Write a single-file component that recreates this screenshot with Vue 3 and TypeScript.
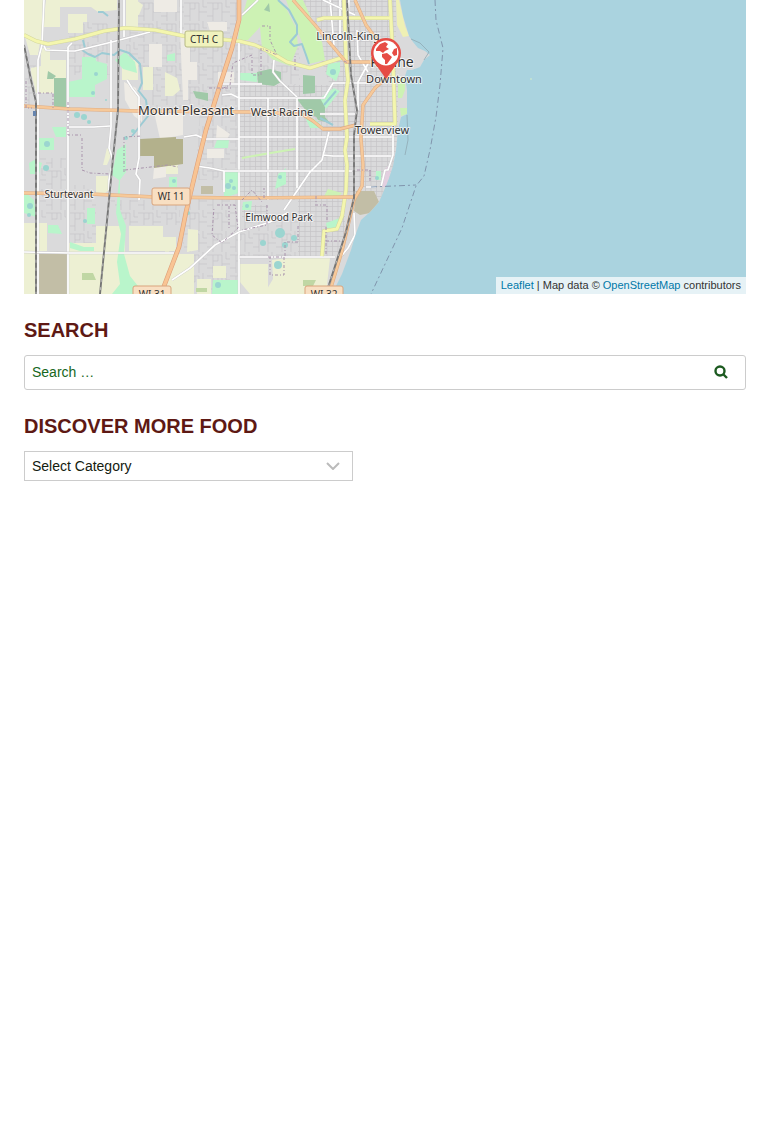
<script setup lang="ts">
import { ref } from 'vue'

interface Area { d: string; kind: string }
interface Road { d: string; kind: string }
interface Place { x: number; y: number; name: string; size: number }
interface Shield { x: number; y: number; w: number; h: number; ref: string; kind: string }

const query = ref('')
const category = ref('')

const areas: Area[] = [
  { kind: 'farm', d: 'M24 0H45L42 44L28 42L24 35Z M46 0H83V7H60V27H43Z M68 14H87V22H83V33H68Z M41 48H50V60H66V93H36L31 72V68L41 66Z' },
  { kind: 'farm', d: 'M83 0H117V10L98 12L91 7H83Z M126 0H138V28H126Z M122 60H138V80H122Z M143 67H153V90H143Z M24 33L40 42L38 55H30Z' },
  { kind: 'farm', d: 'M24 223H47V251H24Z M24 253H37V294H24Z M96 176H109V190L105 193H96Z M96 226H125V252H68V243H96Z M68 254H194V294H68Z M129 226H163V237H176V251H129Z' },
  { kind: 'farm', d: 'M165 239V245H171L169 252H165Z M188 229L198 230V250L187 252Z M213 266H226V278H213Z M197 279H211V294H197Z M272 260L289 258H330L326 294H264L273 279Z M240 264H268V294H250L240 282Z' },
  { kind: 'farm', d: 'M165 72L177 78L180 90L173 96H165Z M136 0L143 5L139 15L131 13Z M107 148L112 153L107 165H103Z M165 165H178V174H165Z' },
  { kind: 'pale', d: 'M180 30H190V62H197V80H188V100H183Z M207 22H227V31H210Z M124 82L136 88L142 110V122L134 116L125 100Z M154 112H183V135L160 139Z M218 72H234V83H218Z M217 125L230 134L226 141L216 139Z M154 168L166 164V177L153 179Z M207 149H224V158H207Z M154 0H177V12H154Z M149 44H162V67H149Z' },
  { kind: 'olive', d: 'M140 139L176 137V139H183V164L154 168V156H140Z' },
  { kind: 'dun', d: 'M38 254H67V294H38Z M356 191L374 191L379 202L370 213L360 215L354 211Z M201 186H213V194H201Z' },
  { kind: 'wood', d: 'M54 78H66V109H54Z M48 71L56 76L53 79H47Z M257 72L270 69L281 72V82L274 86L258 84Z M303 75L315 76V93L303 94Z M297 99H325V119L310 115L303 107Z M193 91L208 93V101L196 98Z' },
  { kind: 'scrub', d: 'M82 273L93 273L96 280H82Z M196 288H207V292H196Z M303 280H316L313 286H303Z' },
  { kind: 'mint', d: 'M82 57H96V61L107 64V79L95 85V97H68V82L82 79Z M29 163L34 160L42 163L39 174H30Z M87 208H95V224H87Z M48 225L58 225L62 234L48 233Z M70 242L84 247L94 247V251L80 251L70 248Z' },
  { kind: 'mint', d: 'M117 150L126 144V172L120 180V210L126 226L124 254L130 276L138 286L134 294H112L120 284L117 262L121 234L116 213L119 180L112 175Z M115 60L125 52L135 62L137 73L123 69Z M240 73L257 73V82L240 80Z M167 55L175 53V61H167Z M52 127H66V137H56Z M39 138H54V150H39Z' },
  { kind: 'mint', d: 'M224 171L239 172L239 193L224 198Z M243 202L252 201L251 210H242Z M278 174L286 168L286 184L275 189Z M213 280H239V294H212Z M217 140H229L228 148H214Z M169 177H177V187H169Z M326 223L340 218V228H327Z M376 171H381V180H376Z M24 191L34 200L36 217L24 213Z' },
  { kind: 'mint', d: 'M328 64L340 62V71L336 81L326 74Z M320 98L334 88L340 91L326 109Z M304 115L316 120L324 128H310Z' },
  { kind: 'grass', d: 'M239 28L247 0H278L287 10L296 28L298 46L290 66L272 59L262 48L260 27L248 40H238Z M286 0H303L322 42L325 60L309 64L303 45L296 27Z M305 24L310 32H305Z' },
  { kind: 'beach', d: 'M396 0H399L405 26L409 36L403 37L397 25Z' },
  { kind: 'grass', d: 'M398 80L405 78V90L402 98H398Z M400 108H407V114L401 116Z M242 157L270 152L295 148V150L271 154L242 159Z M328 189L342 193L337 198H323Z' },
  { kind: 'wood', d: 'M314 113L325 117L330 123L318 120Z M264 10L269 3L270 12Z' },
  { kind: 'pink', d: 'M383 171L388 166L391 169L389 178L386 187H381Z' },
]

const roads: Road[] = [
  { kind: 'minor', d: 'M44 0L42 45L38 60L38 294 M68 47V294 M111 40V127L109 148L113 160L109 180L109 190 M68 47L72 43 M124 0V37 M44 46L46 50L75 51L112 42L150 32 M127 80L132 88L139 97L139 158L136 174L140 180L139 200 M181 0V36' },
  { kind: 'minor', d: 'M68 127H94L110 126 M24 252L70 253H174 M239 42V294 M220 84H262 M222 95L231 94L239 98H324L333 83H352 M268 98V200 M297 98V188 M239 137H352L393 137 M184 137L196 135L205 139H239 M239 112H250 M320 114H355' },
  { kind: 'minor', d: 'M274 60L273 72L280 81L297 97 M196 166L210 168L224 171H352 M224 171V192 M329 132L322 160L310 172L284 210 M323 155L333 156H392 M172 280L190 268L215 245L239 232L270 222L287 213 M239 257H335 M330 0L334 45 M340 0V40' },
  { kind: 'minor', d: 'M393 127V155L388 170H385L381 187 M349 0L348 26 M323 0L355 15 M354 213L355 235L348 248L338 260 M357 30L358 55L368 72 M242 15L258 0 M370 60L358 82V110 M352 83H368 M376 187H366' },
  { kind: 'yellow', d: 'M24 35L36 41L48 44L75 39L104 31L125 28L155 30L184 36L239 41L255 45L272 53L287 62L310 68L344 57' },
  { kind: 'yellow', d: 'M317 20L324 18H390 M344 0L346 60L348 80L345 100L347 137L345 150L347 165L346 190L342 216L337 229L324 231L322 256 M390 0L393 60L395 124H370' },
  { kind: 'orange', d: 'M24 106L70 109L138 111L250 112L302 114L313 121L323 129L340 129L356 125 M24 193L90 194L155 197L240 198L355 197' },
  { kind: 'orange', d: 'M293 0L315 25L340 55L346 62H386 M355 0L366 25L380 44 M390 75L375 88L363 105L361 138L363 165L362 186L354 200L342 251L329 294' },
  { kind: 'trunk', d: 'M239 0V20L232 48L220 85L206 130L198 162L186 212L179 247L161 294' },
]

const rails = [
  'M24 45L31 80L36 102L36 294',
  'M119 0L118 110L113 158L100 294',
  'M347 0L349 38L351 75L357 110L354 135V198L346 232L326 294',
]

const creeks = [
  'M278 0L289 10L297 25L297 34L290 42L294 46L302 44L306 55L309 64',
  'M82 50L88 54L95 57L102 53L114 55L120 50L129 53L140 64L142 83L139 90',
  'M83 40L85 48 M138 90L146 100L148 116L140 126L132 136',
  'M98 12L103 12L108 16 M324 105L336 91 M320 118L333 125',
]

const ponds = [
  [96, 74, 2], [93, 93, 2], [77, 115, 3], [84, 117, 3], [89, 122, 2], [106, 100, 1],
  [46, 168, 3], [30, 206, 3], [29, 215, 2], [85, 221, 2], [47, 144, 3], [174, 181, 2],
  [228, 186, 3], [234, 188, 2], [231, 181, 2], [280, 177, 2], [247, 206, 2], [280, 233, 5],
  [263, 243, 3], [294, 238, 3], [278, 265, 4], [285, 245, 3], [188, 213, 2], [218, 285, 3],
  [377, 178, 2], [133, 131, 2], [126, 138, 2], [333, 72, 3],
]

const boundaries = [
  'M82 138V170L90 173L110 174 M124 172V137L142 136 M26 81V108H32 M38 93H53V108 M68 102V135H82 M125 170L168 165L178 167',
  'M217 205H235L238 228L222 243L212 235L214 207 M262 26H270V40L277 55L261 48V75H252V55L233 63L230 85L219 90',
  'M242 200L252 190L262 202 M267 205V225L242 230 M315 205H327V222 M326 227V255 M326 241H342',
  'M268 257H284V275H270V257 M285 256V242H298V225 M209 88H231 M370 170V182 M357 170H370V180',
  'M316 196V204 M264 198V188 M229 206V230 M295 70V54 M344 61L350 64',
]

const places: Place[] = [
  { x: 348, y: 40, name: 'Lincoln-King', size: 11 },
  { x: 392, y: 67, name: 'Racine', size: 14 },
  { x: 394, y: 83, name: 'Downtown', size: 11 },
  { x: 186, y: 115, name: 'Mount Pleasant', size: 13 },
  { x: 282, y: 116, name: 'West Racine', size: 11 },
  { x: 382, y: 134, name: 'Towerview', size: 11 },
  { x: 69, y: 198, name: 'Sturtevant', size: 10 },
  { x: 279, y: 221, name: 'Elmwood Park', size: 10 },
]

const shields: Shield[] = [
  { x: 185, y: 31, w: 38, h: 16, ref: 'CTH C', kind: 'county' },
  { x: 152, y: 188, w: 38, h: 17, ref: 'WI 11', kind: 'state' },
  { x: 133, y: 286, w: 38, h: 17, ref: 'WI 31', kind: 'state' },
  { x: 305, y: 286, w: 38, h: 17, ref: 'WI 32', kind: 'state' },
]

const coast = 'M24 0H400L403 16L409 36L413 42L418 48L425 51L430 55L424 60L420 67L412 70H407L405 76L407 90V114L401 117L398 130L396 150L393 166L389 178L385 188L379 202L370 212L361 220L355 236L351 250L342 274L332 294H24Z'
</script>

<template>
  <main class="page">
    <section class="map" aria-label="Map of Racine">
      <svg class="tiles" viewBox="24 0 722 294" preserveAspectRatio="xMinYMin slice">
        <defs>
          <pattern id="blocks" width="11" height="10" patternUnits="userSpaceOnUse">
            <path d="M0 1.5H11M0 6.5H11M2.5 0V10M8 0V10" class="street" />
          </pattern>
          <pattern id="lanes" width="23" height="21" patternUnits="userSpaceOnUse">
            <path d="M0 3H15V12H23M6 3V21M0 16H6M15 12V21M11 3V9H6M19 0V7H23" class="street" />
          </pattern>
          <clipPath id="land"><path :d="coast" /></clipPath>
        </defs>
        <path :d="coast" class="ground" />
        <g clip-path="url(#land)">
          <path d="M239 85H398V200H239Z M300 0H396V85H330Z M242 205H268V220H242Z M298 200H345V256H298Z" fill="url(#blocks)" />
          <path d="M126 0H239V110H150V70H126Z M68 22H110V75H68Z M40 158H66V220H40Z M70 185H96V245H70Z M185 196H240V294H180Z M110 200H180V225H128Z M239 40H300V85H239Z M200 110H239V180H195Z M240 220H298V258H240Z M25 50H36V105H25Z" fill="url(#lanes)" />
          <path v-for="(area, i) in areas" :key="i" :d="area.d" :class="area.kind" />
          <path v-for="(creek, i) in creeks" :key="i" :d="creek" class="creek" />
          <circle v-for="(pond, i) in ponds" :key="i" :cx="pond[0]" :cy="pond[1]" :r="pond[2]" class="pond" />
          <g v-for="(road, i) in roads" :key="i">
            <path :d="road.d" :class="['casing', road.kind + '-casing']" />
            <path :d="road.d" :class="['road', road.kind]" />
          </g>
          <path v-for="(line, i) in boundaries" :key="i" :d="line" class="boundary" />
          <g v-for="(rail, i) in rails" :key="i">
            <path :d="rail" class="rail" />
            <path :d="rail" class="sleepers" />
          </g>
          <rect x="33" y="111" width="3" height="5" class="station" />
        </g>
        <path d="M407 115L408 140L405 155 M411 39L420 43L429 52L424 60" class="pier" />
        <path d="M435 0L436 20L443 48L440 85L436 117L430 150L424 176L416 186L402 228L386 262L371 294 M371 187L416 185" class="limit" />
        <circle cx="531" cy="79" r="1" class="islet" />

        <g v-for="shield in shields" :key="shield.ref">
          <rect :x="shield.x" :y="shield.y" :width="shield.w" :height="shield.h" rx="2" :class="shield.kind" />
          <text :x="shield.x + shield.w / 2" :y="shield.y + 12" class="shield-text">{{ shield.ref }}</text>
        </g>
        <text v-for="place in places" :key="place.name" :x="place.x" :y="place.y" :font-size="place.size" class="place">{{ place.name }}</text>

        <g>
          <path d="M374 62H398L386 79Z" class="pin" />
          <circle cx="386" cy="53" r="15" class="pin" />
          <circle cx="386" cy="53" r="12.500" class="pin-face" />
          <path d="M376 49L380 44L385 42L388 44L386 47L389 49L385 51L383 53L380 51L376 51Z M394 49L397 48V55L394 56L392 53Z M382 54L387 53L392 57L390 60L387 64L385 64V60L382 57Z" class="pin" />
        </g>
      </svg>
      <div class="attribution">
        <a href="#leaflet">Leaflet</a> | Map data © <a href="#osm">OpenStreetMap</a> contributors
      </div>
    </section>

    <section class="widget">
      <h2>SEARCH</h2>
      <form class="search" role="search" @submit.prevent>
        <input v-model="query" type="search" placeholder="Search …" aria-label="Search for" />
        <button type="submit" aria-label="Search">
          <svg viewBox="0 0 14 14" width="14" height="14" aria-hidden="true">
            <circle cx="6" cy="6" r="4.500" />
            <path d="M9.500 9.500L13 13" />
          </svg>
        </button>
      </form>
    </section>

    <section class="widget">
      <h2><label for="category">DISCOVER MORE FOOD</label></h2>
      <div class="picker">
        <select id="category" v-model="category">
          <option value="">Select Category</option>
        </select>
        <svg class="chevron" viewBox="0 0 14 8" width="14" height="8" aria-hidden="true">
          <path d="M1 1L7 7L13 1" />
        </svg>
      </div>
    </section>
  </main>
</template>

<style>
body {
  margin: 0;
  background: #fff;
}
</style>

<style scoped>
.page {
  padding: 0 24px;
  font-family: "Liberation Sans", Arial, sans-serif;
  font-size: 14px;
}
.map {
  position: relative;
  height: 294px;
  overflow: hidden;
  background: #aad3df;
}
.tiles {
  display: block;
  width: 100%;
  height: 100%;
}
.attribution {
  position: absolute;
  right: 0;
  bottom: 0;
  padding: 0 5px;
  background: rgba(255, 255, 255, 0.7);
  color: #333;
  font-size: 11px;
  line-height: 17px;
}
.attribution a {
  color: #0078a8;
  text-decoration: none;
}
.ground { fill: #dadadb; }
.street { fill: none; stroke: #c5c4c7; stroke-width: 0.7; }
.farm { fill: #edf0d3; }
.pale { fill: #eeebe5; }
.olive { fill: #b3b18c; }
.dun { fill: #c2bea6; }
.wood { fill: #a0c9a8; }
.scrub { fill: #c0d7a4; }
.mint { fill: #b9f5cb; }
.grass { fill: #cdf2b4; }
.beach { fill: #eff0b4; }
.pink { fill: #e3cfe0; }
.creek { fill: none; stroke: #9ccbd4; stroke-width: 2; stroke-linejoin: round; }
.pond { fill: #9bd5d0; }
.casing, .road { fill: none; stroke-linejoin: round; }
.minor-casing { stroke: #c8c7c8; stroke-width: 2.4; }
.minor { stroke: #fff; stroke-width: 1.7; }
.yellow-casing { stroke: #d3d79c; stroke-width: 4; }
.yellow { stroke: #f4f6ae; stroke-width: 3; }
.orange-casing { stroke: #e0ac82; stroke-width: 3.4; }
.orange { stroke: #f6c99a; stroke-width: 2.3; }
.trunk-casing { stroke: #de9f78; stroke-width: 4.6; }
.trunk { stroke: #f8c494; stroke-width: 3.4; }
.boundary { fill: none; stroke: #a994ac; stroke-width: 1; stroke-dasharray: 3 2 1 2; }
.rail { fill: none; stroke: #757575; stroke-width: 1.9; }
.sleepers { fill: none; stroke: #c9c9c9; stroke-width: 0.8; stroke-dasharray: 3 5; }
.station { fill: #6684ae; }
.pier { fill: none; stroke: #8fa9b4; stroke-width: 0.8; }
.limit { fill: none; stroke: #8195ad; stroke-width: 1; stroke-dasharray: 6 3 2 3; }
.islet { fill: #c6e4d0; }
.county { fill: #f0f2bd; stroke: #b6b984; }
.state { fill: #f8dfc2; stroke: #d9a47d; }
.shield-text, .place {
  font-family: "Noto Sans", sans-serif;
  text-anchor: middle;
  fill: #333;
}
.shield-text { font-size: 10px; }
.place {
  paint-order: stroke;
  stroke: rgba(255, 255, 255, 0.7);
  stroke-width: 2px;
  stroke-linejoin: round;
}
.pin { fill: #e64c45; }
.pin-face { fill: #fff; }

.widget {
  margin-top: 24px;
}
h2 {
  margin: 0 0 13px;
  color: #5e1914;
  font-size: 20px;
  font-weight: 700;
  line-height: 24px;
}
.search {
  display: flex;
  box-sizing: border-box;
  height: 35px;
  padding-bottom: 1px;
  border: 1px solid #ccc;
  border-radius: 3px;
}
.search input {
  flex: 1;
  min-width: 0;
  padding: 0 7px;
  border: 0;
  background: none;
  color: #17671d;
  font: inherit;
  outline: 0;
  appearance: none;
}
.search input::placeholder {
  color: #17671d;
  opacity: 1;
}
.search button {
  display: flex;
  align-items: center;
  justify-content: center;
  width: 48px;
  padding: 0;
  border: 0;
  background: none;
}
.search button svg {
  fill: none;
  stroke: #1c5a20;
  stroke-width: 2.4;
}
.picker {
  position: relative;
  width: 329px;
  max-width: 100%;
}
.picker select {
  display: block;
  width: 100%;
  height: 30px;
  padding: 0 32px 0 7px;
  border: 1px solid #ccc;
  border-radius: 0;
  background: #fff;
  color: #13200f;
  font: inherit;
  appearance: none;
}
.chevron {
  position: absolute;
  top: 11px;
  right: 13px;
  fill: none;
  stroke: #bbb;
  stroke-width: 2;
  pointer-events: none;
}
</style>
